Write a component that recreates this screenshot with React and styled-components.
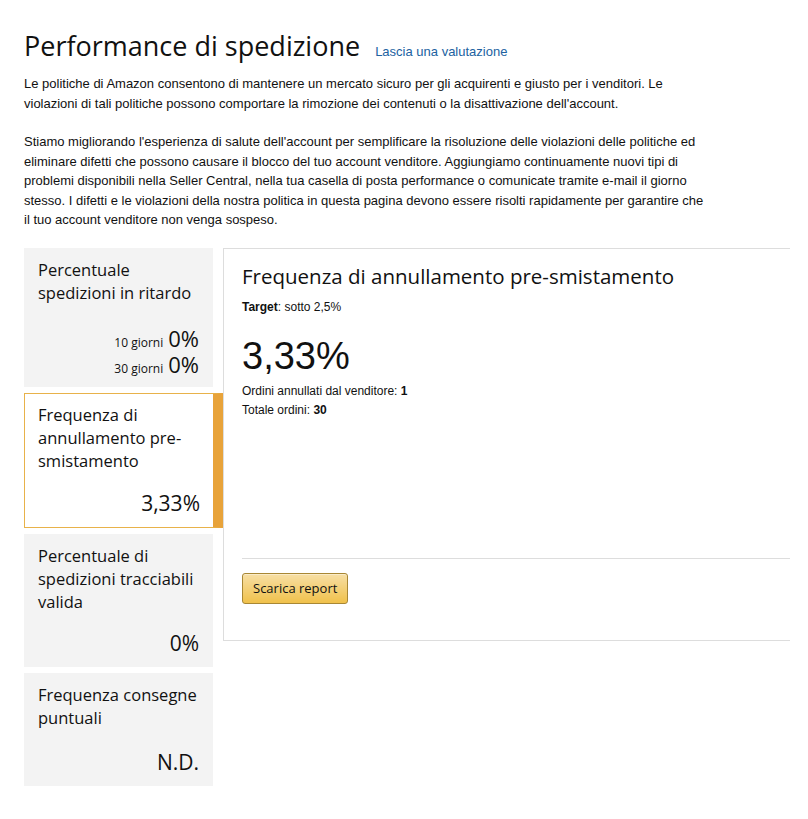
import React from "react";
import styled, { createGlobalStyle } from "styled-components";

const Global = createGlobalStyle`
  html, body { margin: 0; padding: 0; background: #fff; }
  body { font-family: "Liberation Sans", Arial, sans-serif; color: #111; }
  * { box-sizing: border-box; }
`;

const Page = styled.div`
  width: 808px;
  padding: 28px 18px 40px 24px;
`;

const Header = styled.div`
  display: flex;
  align-items: baseline;
  gap: 15px;
`;

const Title = styled.h1`
  margin: 0;
  font-family: "Open Sans", sans-serif;
  font-weight: 400;
  font-size: 27px;
  line-height: 36px;
  color: #111;
`;

const Link = styled.a`
  font-family: "Liberation Sans", Arial, sans-serif;
  font-size: 13px;
  color: #2162a1;
  text-decoration: none;
`;

const Para = styled.p`
  margin: 10px 0 0 0;
  font-size: 13px;
  line-height: 19.5px;
  max-width: 686px;
  & + & { margin-top: 19px; }
`;

const Main = styled.div`
  display: flex;
  align-items: flex-start;
  margin-top: 18px;
`;

const Tiles = styled.div`
  display: flex;
  flex-direction: column;
  gap: 6px;
  width: 199px;
`;

const Tile = styled.div`
  width: ${(p) => (p.$active ? "199px" : "189px")};
  background: ${(p) => (p.$active ? "#fff" : "#f3f3f3")};
  border: ${(p) => (p.$active ? "1px solid #e8b24a" : "none")};
  border-right: ${(p) => (p.$active ? "10px solid #e8a33a" : "none")};
  padding: ${(p) => (p.$active ? "9px 13px 10px 13px" : "10px 14px 10px 14px")};
  font-family: "Open Sans", sans-serif;
`;

const TileTitle = styled.div`
  font-size: 16.5px;
  line-height: 23px;
  color: #111;
`;

const TileValues = styled.div`
  margin-top: ${(p) => p.$gap}px;
  display: flex;
  flex-direction: column;
  align-items: flex-end;
`;

const ValueRow = styled.div`
  display: flex;
  align-items: baseline;
  gap: 5px;
  height: ${(p) => p.$h || 28}px;
  line-height: ${(p) => p.$h || 28}px;
`;

const Small = styled.span`
  font-size: 12px;
`;

const Value = styled.span`
  font-size: ${(p) => p.$size || 21}px;
`;

const Panel = styled.div`
  flex: 1;
  border-top: 1px solid #ddd;
  border-left: 1px solid #ddd;
  border-bottom: 1px solid #ddd;
  padding: 14px 0 36px 18px;
  min-height: 393px;
  display: flex;
  flex-direction: column;
`;

const PanelTitle = styled.h2`
  margin: 0;
  font-family: "Open Sans", sans-serif;
  font-weight: 400;
  font-size: 20.5px;
  line-height: 26px;
`;

const Line = styled.div`
  font-size: 12px;
  line-height: 19px;
  margin-top: ${(p) => p.$mt || 0}px;
  b { font-weight: 700; }
`;

const Big = styled.div`
  font-family: "Liberation Sans", Arial, sans-serif;
  font-size: 38px;
  line-height: 44px;
  margin: 17px 0 4px 0;
`;

const Divider = styled.div`
  margin-top: auto;
  border-top: 1px solid #ddd;
`;

const Button = styled.button`
  align-self: flex-start;
  margin-top: 14px;
  height: 31px;
  padding: 0 10px;
  font-family: "Open Sans", sans-serif;
  font-size: 13px;
  color: #111;
  border: 1px solid #a88734;
  border-radius: 3px;
  background: linear-gradient(to bottom, #f7dfa5, #f0c14b);
  box-shadow: inset 0 1px 0 rgba(255, 255, 255, 0.4);
`;

export default function App() {
  return (
    <>
      <Global />
      <Page>
        <Header>
          <Title>Performance di spedizione</Title>
          <Link href="#">Lascia una valutazione</Link>
        </Header>
        <Para>
          Le politiche di Amazon consentono di mantenere un mercato sicuro per gli acquirenti e giusto per i venditori. Le violazioni di tali politiche possono comportare la rimozione dei contenuti o la disattivazione dell'account.
        </Para>
        <Para>
          Stiamo migliorando l'esperienza di salute dell'account per semplificare la risoluzione delle violazioni delle politiche ed eliminare difetti che possono causare il blocco del tuo account venditore. Aggiungiamo continuamente nuovi tipi di problemi disponibili nella Seller Central, nella tua casella di posta performance o comunicate tramite e-mail il giorno stesso. I difetti e le violazioni della nostra politica in questa pagina devono essere risolti rapidamente per garantire che il tuo account venditore non venga sospeso.
        </Para>
        <Main>
          <Tiles>
            <Tile>
              <TileTitle>Percentuale<br />spedizioni in ritardo</TileTitle>
              <TileValues $gap={21}>
                <ValueRow $h={26}><Small>10 giorni</Small><Value $size={22}>0%</Value></ValueRow>
                <ValueRow $h={26}><Small>30 giorni</Small><Value $size={22}>0%</Value></ValueRow>
              </TileValues>
            </Tile>
            <Tile $active>
              <TileTitle>Frequenza di<br />annullamento pre-<br />smistamento</TileTitle>
              <TileValues $gap={17}>
                <ValueRow><Value>3,33%</Value></ValueRow>
              </TileValues>
            </Tile>
            <Tile>
              <TileTitle>Percentuale di<br />spedizioni tracciabili<br />valida</TileTitle>
              <TileValues $gap={16}>
                <ValueRow><Value>0%</Value></ValueRow>
              </TileValues>
            </Tile>
            <Tile>
              <TileTitle>Frequenza consegne<br />puntuali</TileTitle>
              <TileValues $gap={19}>
                <ValueRow><Value>N.D.</Value></ValueRow>
              </TileValues>
            </Tile>
          </Tiles>
          <Panel>
            <PanelTitle>Frequenza di annullamento pre-smistamento</PanelTitle>
            <Line $mt={9}><b>Target</b>: sotto 2,5%</Line>
            <Big>3,33%</Big>
            <Line>Ordini annullati dal venditore: <b>1</b></Line>
            <Line>Totale ordini: <b>30</b></Line>
            <Divider />
            <Button>Scarica report</Button>
          </Panel>
        </Main>
      </Page>
    </>
  );
}
